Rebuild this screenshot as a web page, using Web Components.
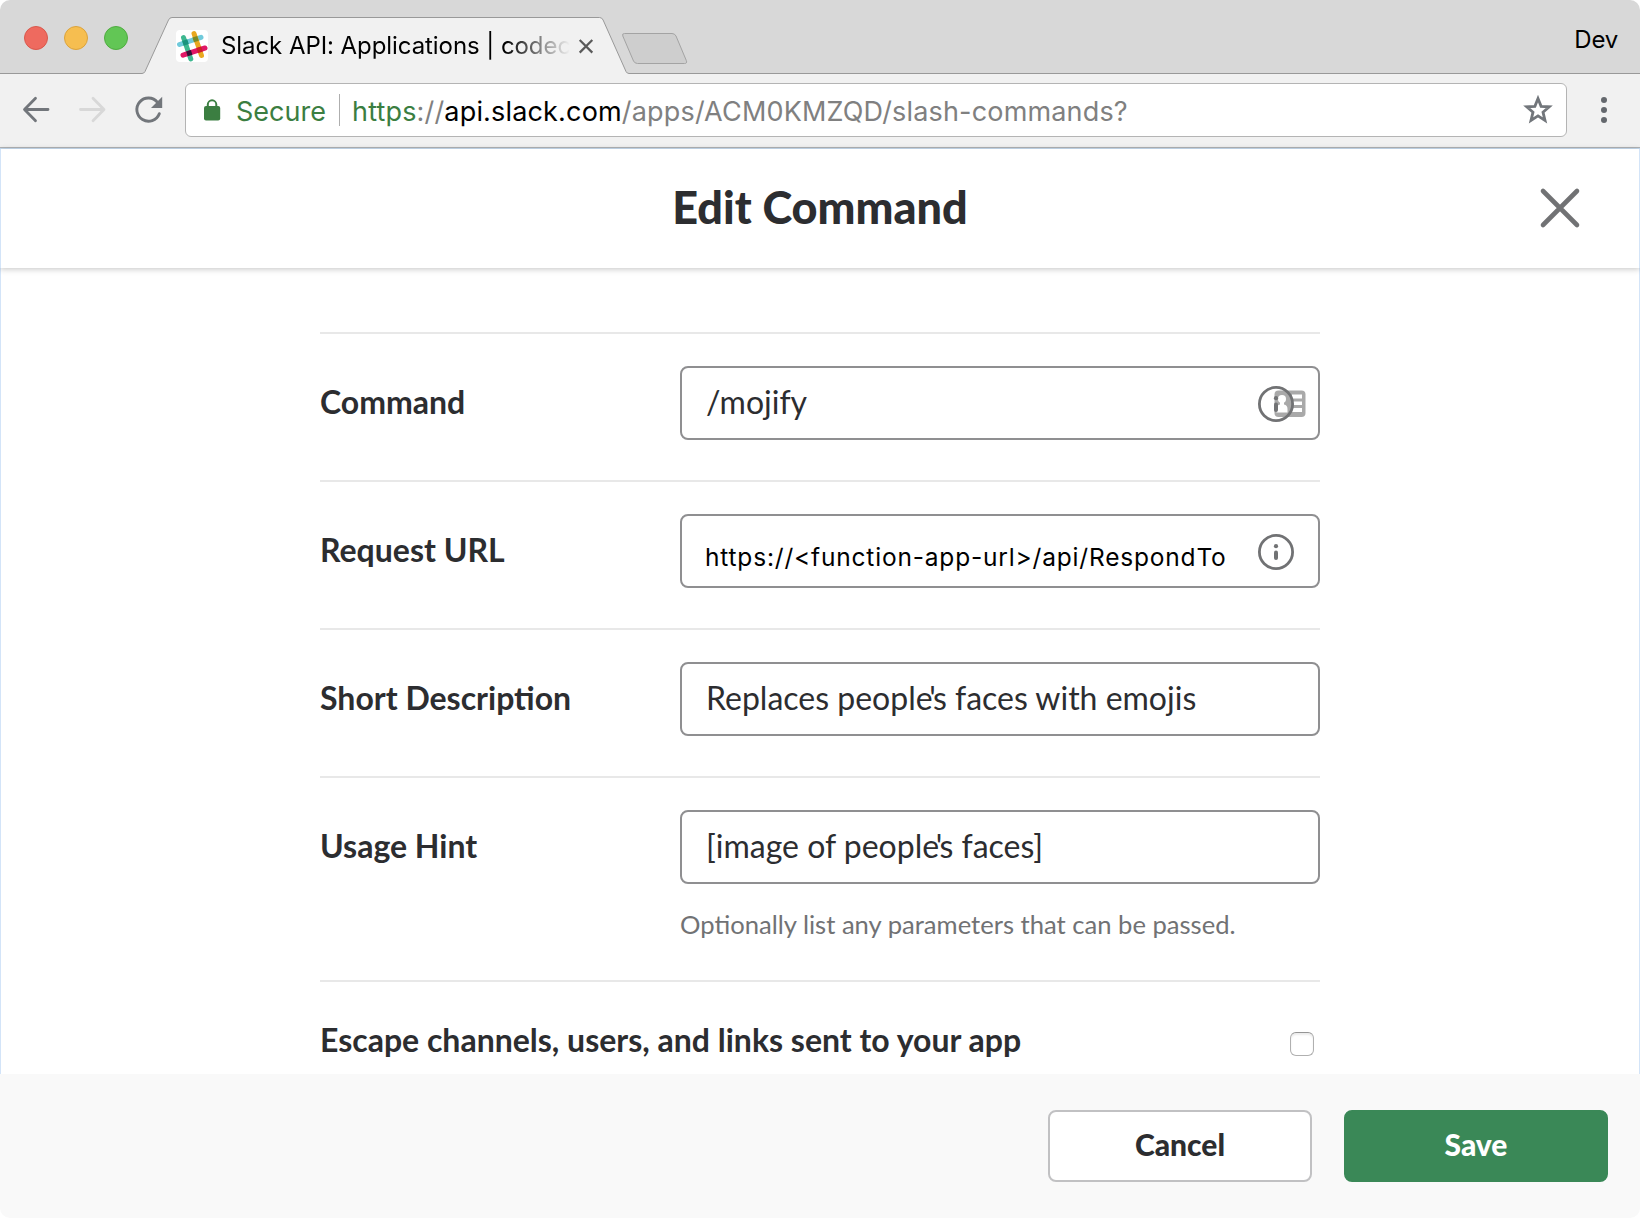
<!DOCTYPE html>
<html lang="en">
<head>
<meta charset="utf-8">
<title>Slack API: Applications</title>
<style>
  html, body { margin: 0; background: #fff; }
</style>
</head>
<body>
<app-window></app-window>

<template id="app-window">
  <style>
    :host { display: flex; flex-direction: column; width: 1640px; height: 1218px; border-radius: 10px; overflow: hidden; background: #fff; }
    .page { flex: 1; min-height: 0; display: flex; flex-direction: column; border-top: 1px solid #c9def3; }
  </style>
  <tab-strip></tab-strip>
  <tool-bar></tool-bar>
  <div class="page">
    <dialog-header>Edit Command</dialog-header>
    <command-form></command-form>
    <dialog-footer></dialog-footer>
  </div>
</template>

<template id="tab-strip">
  <style>
    :host { display: grid; height: 74px; background: #d8d8d8; font: 24px Inter, sans-serif; color: #000; }
    .shape, .row { grid-area: 1 / 1; }
    .shape { display: block; }
    .row { display: flex; align-items: flex-start; }
    .lights { display: flex; gap: 16px; padding: 26px 0 0 24px; width: 152px; }
    .lights i { box-sizing: border-box; width: 24px; height: 24px; border-radius: 50%; border: 1px solid var(--edge); background: var(--fill); }
    .r { --fill: #ee6a5f; --edge: #d9584c; }
    .y { --fill: #f6be50; --edge: #dba33c; }
    .g { --fill: #62c655; --edge: #4fac40; }
    .fav { margin-top: 30px; }
    .title { margin: 31px 0 0 12px; line-height: 30px; width: 350px; height: 34px; overflow: hidden; white-space: nowrap; letter-spacing: -0.07px;
      -webkit-mask-image: linear-gradient(90deg, #000 284px, transparent 349px); mask-image: linear-gradient(90deg, #000 284px, transparent 349px); }
    .close { margin: 38px 0 0 7px; }
    .profile { margin: 25px 22px 0 auto; line-height: 30px; letter-spacing: -0.2px; }
    svg { display: block; flex: none; }
  </style>
  <svg class="shape" width="1640" height="74" viewBox="0 0 1640 74">
    <path d="M0 73.5H142Q144 73.5 145 71.500L168.500 20Q169.600 17.500 172 17.500H599.500Q602 17.500 603.100 20L626 71.500Q627 73.500 629 73.500H1640V75H0Z" fill="#f1f1f1"/>
    <path d="M0 73.5H142Q144 73.5 145 71.500L168.500 20Q169.600 17.500 172 17.500H599.500Q602 17.500 603.100 20L626 71.500Q627 73.500 629 73.500H1640" fill="none" stroke="#999"/>
    <path d="M624.500 33.500H672Q674.800 33.500 676 36L686.300 60.500Q687.500 63.500 684.500 63.500H637.500Q634.800 63.500 633.500 61L622.800 36Q621.800 33.500 624.500 33.500Z" fill="#cecece" stroke="#a3a3a3"/>
  </svg>
  <div class="row">
    <div class="lights"><i class="r"></i><i class="y"></i><i class="g"></i></div>
    <svg class="fav" width="33" height="32" viewBox="0 0 33 32">
      <rect width="32" height="32" rx="4" fill="#fff"/>
      <g fill="none" stroke-width="5" stroke-linecap="round">
        <path d="M3.500 14.500L25 7.300" stroke="#70cadb"/>
        <path d="M18 3.500L25.500 25.500" stroke="#e9a820"/>
        <path d="M7.500 7.500L14.800 29" stroke="#3eb890"/>
        <path d="M7 25.200L29 18" stroke="#e01765"/>
      </g>
      <g stroke-width="5">
        <path d="M7 13.300L12 11.700" stroke="#1a937d"/>
        <path d="M17.200 9.900L22 8.300" stroke="#7a8a29"/>
        <path d="M10.900 23.900L15.600 22.400" stroke="#361238"/>
        <path d="M21.300 20.500L26 19" stroke="#cc2027"/>
      </g>
    </svg>
    <div class="title">Slack API: Applications | codec</div>
    <svg class="close" width="16" height="16" viewBox="0 0 16 16"><path d="M1.700 2L14.300 14.600M14.300 2L1.700 14.600" stroke="#5a5a5a" stroke-width="2.200"/></svg>
    <div class="profile">Dev</div>
  </div>
</template>

<template id="tool-bar">
  <style>
    :host { display: flex; box-sizing: border-box; height: 74px; padding-top: 9px; background: #f1f1f1; border-bottom: 1px solid #b2b4b6; }
    .nav { display: flex; gap: 26px; padding: 11px 0 0 21px; width: 164px; height: 32px; }
    svg { display: block; flex: none; }
    .box { box-sizing: border-box; width: 1382px; height: 54px; background: #fff; border: 1px solid #b4b4b4; border-radius: 6px; display: flex; align-items: center; font: 27px/30px Inter, sans-serif; color: #808080; }
    .lock { margin: 0 0 0 18px; }
    .secure { margin-left: 14px; width: 103px; color: #3b7e41; padding-top: 3px; }
    .sep { width: 1px; height: 32px; background: #aeaeae; }
    .url { margin-left: 12px; letter-spacing: .17px; white-space: nowrap; padding-top: 3px; }
    .url b { font-weight: 400; color: #000; }
    .url em { font-style: normal; color: #3b7e41; }
    .star { margin: 0 12px 0 auto; }
    .menu { margin: 13px 0 0 33px; }
  </style>
  <div class="nav">
    <svg width="30" height="30" viewBox="0 0 30 30"><path d="M27 15.500H4M14.500 4.300L3.500 15.500L14.500 26.700" fill="none" stroke="#72767b" stroke-width="2.800" stroke-linecap="round" stroke-linejoin="round"/></svg>
    <svg width="30" height="30" viewBox="0 0 30 30"><path d="M3.500 15.500H26.500M16 4.300L27 15.500L16 26.700" fill="none" stroke="#d8d8d8" stroke-width="2.800" stroke-linecap="round" stroke-linejoin="round"/></svg>
    <svg width="30" height="30" viewBox="-1 0 30 30"><path d="M25.300 19.700A11.600 11.600 0 1 1 23.500 8.300" fill="none" stroke="#72767b" stroke-width="2.900" stroke-linecap="round"/><path d="M28.200 2.800V14H17Z" fill="#72767b"/></svg>
  </div>
  <div class="box">
    <svg class="lock" width="18" height="22" viewBox="0 0 18 22"><rect x="0" y="7" width="16.200" height="14.500" rx="2" fill="#3b7e41"/><path d="M3.800 8V5.600a4.200 4.200 0 0 1 8.500 0V8" fill="none" stroke="#3b7e41" stroke-width="2"/></svg>
    <span class="secure">Secure</span>
    <span class="sep"></span>
    <span class="url"><em>https</em>://<b>api.slack.com</b>/apps/ACM0KMZQD/slash-commands?</span>
    <svg class="star" width="32" height="32" viewBox="0 0 32 32"><path d="M16 4.500L19.100 12.300L27.300 12.800L21 18.200L23 26.400L16 21.900L9 26.400L11 18.200L4.700 12.800L12.900 12.300Z" fill="none" stroke="#72767b" stroke-width="2.800"/></svg>
  </div>
  <svg class="menu" width="10" height="30" viewBox="0 0 10 30"><g fill="#64686d"><circle cx="4" cy="4" r="3"/><circle cx="4" cy="14" r="3"/><circle cx="4" cy="24" r="3"/></g></svg>
</template>

<template id="dialog-header">
  <style>
    :host { display: grid; grid-template-columns: 1fr auto 1fr; align-items: center; flex: none; height: 119px; position: relative; z-index: 1; background: #fff; box-shadow: 0 1px 6px rgba(0,0,0,.24); border: solid #d3e4f8; border-width: 0 1px; }
    h1 { grid-column: 2; margin: 0; padding-bottom: 4px; font: 900 45px/54px Lato, sans-serif; color: #2c2d30; }
    svg { justify-self: end; margin: 0 58px 1px 0; }
  </style>
  <h1><slot></slot></h1>
  <svg width="42" height="42" viewBox="0 0 42 42"><path d="M4 4L38 38M38 4L4 38" stroke="#717274" stroke-width="4.600" stroke-linecap="round"/></svg>
</template>

<template id="command-form">
  <style>
    :host { display: block; flex: 1; min-height: 0; overflow: hidden; padding: 64px 319px 0; border: solid #d3e4f8; border-width: 0 1px; }
  </style>
  <form-row label="Command"><text-field icon="info" card>/mojify</text-field></form-row>
  <form-row label="Request URL"><text-field icon="info" plain>https://&lt;function-app-url&gt;/api/RespondTo</text-field></form-row>
  <form-row label="Short Description"><text-field>Replaces peopl<span style="letter-spacing:-2.8px">e'</span>s faces with emojis</text-field></form-row>
  <form-row label="Usage Hint"><text-field>[image of peopl<span style="letter-spacing:-2.8px">e'</span>s faces]</text-field><span slot="hint">Optionally list any parameters that can be passed.</span></form-row>
  <check-row>Escape channels, users, and links sent to your app</check-row>
</template>

<template id="form-row">
  <style>
    :host { display: flex; border-top: 2px solid #e8e8e8; padding: 32px 0 40px; }
    .label { width: 360px; font: 700 32px/71px Lato, sans-serif; color: #2c2d30; white-space: nowrap; }
    .control { flex: 1; display: flex; flex-direction: column; }
    ::slotted([slot=hint]) { display: block; margin-top: 25px; font: 25.6px/31px Lato, sans-serif; color: #717274; white-space: nowrap; }
  </style>
  <div class="label"></div>
  <div class="control"><slot></slot><slot name="hint"></slot></div>
</template>

<template id="text-field">
  <style>
    :host { display: flex; align-items: flex-start; box-sizing: border-box; height: 74px; border: 2px solid #8f8f91; border-radius: 8px; padding: 0 0 0 24px; background: #fff; font: 32px/67px Lato, sans-serif; color: #2c2d30; white-space: pre; }
    :host([plain]) { padding: 6px 0 0 23px; font: 24.5px/70px Inter, sans-serif; letter-spacing: .81px; color: #000; }
    :host([plain]) svg { margin-top: 9px; }
    slot { display: inline; }
    svg { display: none; margin: 15px 0 0 auto; flex: none; }
    :host([icon]) svg { display: block; }
    .card { display: none; }
    :host([card]) .card { display: block; }
  </style>
  <span><slot></slot></span>
  <svg width="62" height="40" viewBox="0 0 62 40">
    <g class="card">
      <rect x="18.500" y="7.500" width="31" height="26.500" rx="4" fill="#a9a9a9"/>
      <g fill="#fff"><rect x="36" y="11.500" width="10" height="4"/><rect x="36" y="18.500" width="10" height="3.500"/><rect x="36" y="25" width="10" height="4"/>
      <circle cx="26" cy="16" r="4"/><path d="M20.500 29.500V26Q20.500 22 24 21.500V18H28V21.500Q31.500 22 31.500 26V29.500Z"/></g>
    </g>
    <circle cx="20" cy="21" r="16.600" fill="none" stroke="#717274" stroke-width="2.800"/>
    <circle cx="20" cy="15.200" r="2.100" fill="#717274"/><rect x="18" y="19.500" width="4" height="9.500" rx="2" fill="#717274"/>
  </svg>
</template>

<template id="check-row">
  <style>
    :host { display: flex; justify-content: space-between; border-top: 2px solid #e8e8e8; padding: 32px 6px 0 0; font: 700 32px/52px Lato, sans-serif; color: #2c2d30; }
    i { box-sizing: border-box; width: 24px; height: 24px; margin-top: 18px; border: 1.500px solid #b0b0b0; border-top-color: #959595; border-radius: 6px; background: #fff; box-shadow: inset 0 2px 2px rgba(0,0,0,.08); }
  </style>
  <span><slot></slot></span><i></i>
</template>

<template id="dialog-footer">
  <style>
    :host { display: flex; justify-content: flex-end; gap: 32px; box-sizing: border-box; height: 144px; flex: none; padding: 36px 32px 0 0; background: #f9f9f9; }
  </style>
  <push-button>Cancel</push-button>
  <push-button primary>Save</push-button>
</template>

<template id="push-button">
  <style>
    :host { display: block; box-sizing: border-box; width: 264px; height: 72px; border: 2px solid #c1c1c3; border-radius: 8px; background: #fff; text-align: center; font: 900 30px/65px Lato, sans-serif; color: #2c2d30; }
    :host([primary]) { background: #3a8857; border-color: #3a8857; color: #fff; }
  </style>
  <slot></slot>
</template>

<script>
  const define = (name, ready) => customElements.define(name, class extends HTMLElement {
    connectedCallback() {
      if (this.shadowRoot) return;
      const root = this.attachShadow({ mode: 'open' });
      root.append(document.getElementById(name).content.cloneNode(true));
      if (ready) ready(this, root);
    }
  });
  define('push-button');
  define('text-field');
  define('form-row', (el, root) => { root.querySelector('.label').textContent = el.getAttribute('label'); });
  define('check-row');
  define('dialog-header');
  define('dialog-footer');
  define('command-form');
  define('tab-strip');
  define('tool-bar');
  define('app-window');
</script>
</body>
</html>
